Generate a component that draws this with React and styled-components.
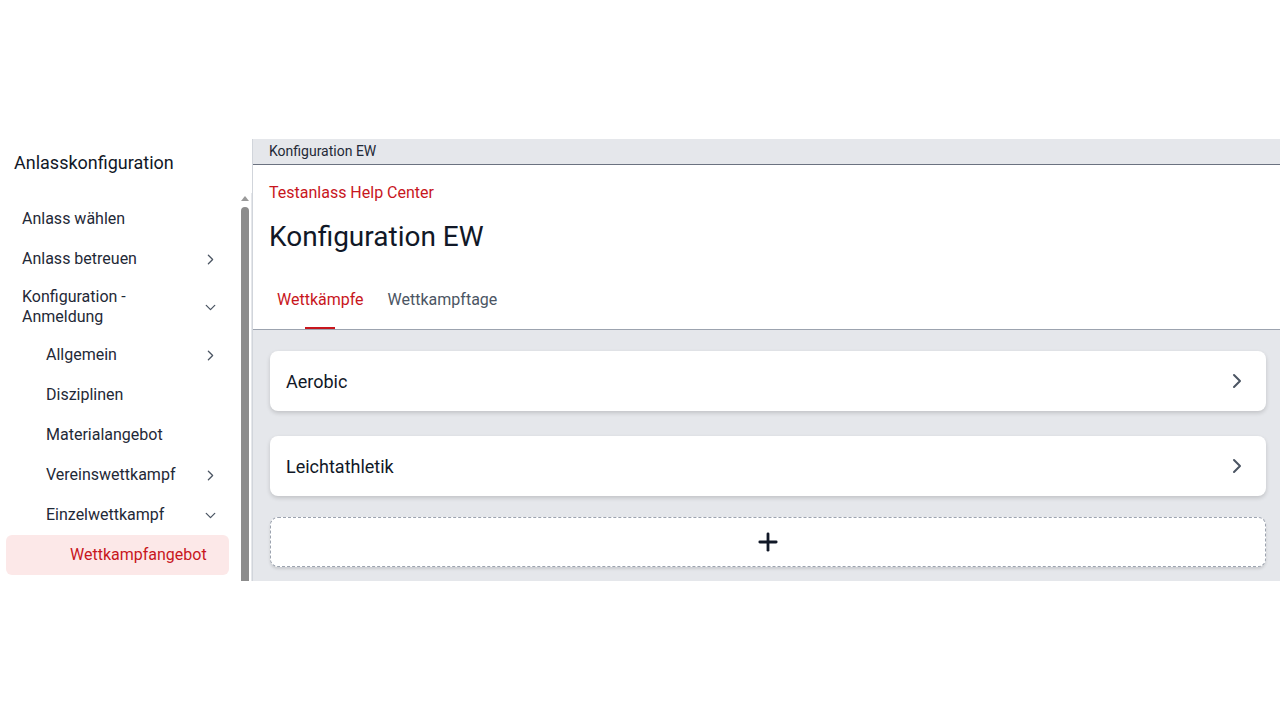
import React from 'react';
import styled, { createGlobalStyle } from 'styled-components';
import { ChevronRight, ChevronDown, Plus } from 'lucide-react';

const GlobalStyle = createGlobalStyle`
  body {
    margin: 0;
    background: #ffffff;
    font-family: Roboto, "Noto Sans", "Liberation Sans", sans-serif;
    color: #111827;
  }
`;

const Page = styled.div`
  display: flex;
  padding-top: 139px;
  height: 442px;
`;

const Sidebar = styled.aside`
  width: 252px;
  display: flex;
  flex-direction: column;
  flex-shrink: 0;
`;

const SideTitle = styled.h2`
  margin: 0;
  padding: 13px 14px 0;
  height: 41px;
  font-size: 18px;
  font-weight: 400;
  line-height: 22px;
  color: #111827;
`;

const SideBody = styled.div`
  flex: 1;
  display: flex;
  min-height: 0;
`;

const NavList = styled.nav`
  flex: 1;
  padding-top: 6px;
  overflow: hidden;
`;

const NavItem = styled.div`
  display: flex;
  align-items: center;
  justify-content: space-between;
  min-height: 40px;
  box-sizing: border-box;
  margin-left: 6px;
  width: 223px;
  padding: 8px 10px 8px ${(p) => 16 + p.level * 24}px;
  border-radius: 6px;
  font-size: 16px;
  line-height: 20px;
  color: ${(p) => (p.active ? '#c8161d' : '#1f2937')};
  background: ${(p) => (p.active ? '#fce8e8' : 'transparent')};
  svg {
    color: #4b5563;
    flex-shrink: 0;
  }
`;

const Rail = styled.div`
  width: 12px;
  display: flex;
  flex-direction: column;
  align-items: center;
  padding-top: 3px;
  border-right: 1px solid #e5e7eb;
`;

const RailArrow = styled.div`
  width: 0;
  height: 0;
  border-left: 4px solid transparent;
  border-right: 4px solid transparent;
  border-bottom: 5px solid #9a9a9a;
  margin-bottom: 6px;
`;

const RailThumb = styled.div`
  flex: 1;
  width: 8px;
  background: #8c8c8c;
  border-radius: 4px 4px 0 0;
`;

const Main = styled.main`
  flex: 1;
  display: flex;
  flex-direction: column;
  border-left: 1px solid #d1d5db;
`;

const Crumb = styled.div`
  height: 26px;
  box-sizing: border-box;
  padding: 3px 16px 0;
  background: #e5e7eb;
  border-bottom: 1px solid #6b7280;
  font-size: 14px;
  line-height: 18px;
  color: #1f2937;
`;

const Head = styled.header`
  padding: 17px 16px 0;
  border-bottom: 1px solid #9ca3af;
`;

const Eyebrow = styled.div`
  font-size: 16px;
  line-height: 22px;
  color: #c8161d;
`;

const Title = styled.h1`
  margin: 16px 0 0;
  font-size: 28px;
  font-weight: 400;
  line-height: 34px;
  color: #111827;
`;

const Tabs = styled.div`
  display: flex;
  margin: 36px 0 0 -4px;
`;

const Tab = styled.button`
  position: relative;
  border: 0;
  background: none;
  padding: 0 12px 19px;
  font-family: inherit;
  font-size: 16px;
  line-height: 20px;
  color: ${(p) => (p.active ? '#c8161d' : '#4b5563')};
  &::after {
    content: '';
    display: ${(p) => (p.active ? 'block' : 'none')};
    position: absolute;
    left: 50%;
    bottom: 0;
    width: 30px;
    height: 2px;
    margin-left: -15px;
    background: #c8161d;
  }
`;

const Content = styled.section`
  flex: 1;
  background: #e5e7eb;
  padding: 21px 14px 0 17px;
  display: flex;
  flex-direction: column;
  gap: 25px;
`;

const Card = styled.div`
  height: 60px;
  box-sizing: border-box;
  display: flex;
  align-items: center;
  justify-content: space-between;
  padding: 0 17px 0 16px;
  background: #ffffff;
  border-radius: 8px;
  box-shadow: 0 2px 4px rgba(0, 0, 0, 0.16);
  font-size: 18px;
  color: #111827;
  svg {
    color: #4b5563;
  }
`;

const AddCard = styled.button`
  margin-top: -4px;
  height: 50px;
  background: #ffffff;
  border: 1px dashed #9ca3af;
  border-radius: 8px;
  box-shadow: 0 2px 3px rgba(0, 0, 0, 0.12);
  display: flex;
  align-items: center;
  justify-content: center;
  color: #111827;
`;

const nav = [
  { label: 'Anlass wählen', level: 0 },
  { label: 'Anlass betreuen', level: 0, icon: 'right' },
  { label: 'Konfiguration -\nAnmeldung', level: 0, icon: 'down' },
  { label: 'Allgemein', level: 1, icon: 'right' },
  { label: 'Disziplinen', level: 1 },
  { label: 'Materialangebot', level: 1 },
  { label: 'Vereinswettkampf', level: 1, icon: 'right' },
  { label: 'Einzelwettkampf', level: 1, icon: 'down' },
  { label: 'Wettkampfangebot', level: 2, active: true },
];

function App() {
  return (
    <>
      <GlobalStyle />
      <Page>
        <Sidebar>
          <SideTitle>Anlasskonfiguration</SideTitle>
          <SideBody>
            <NavList>
              {nav.map((item) => (
                <NavItem key={item.label} level={item.level} active={item.active}>
                  <span style={{ whiteSpace: 'pre-line' }}>{item.label}</span>
                  {item.icon === 'right' && <ChevronRight size={17} strokeWidth={1.8} />}
                  {item.icon === 'down' && <ChevronDown size={17} strokeWidth={1.8} />}
                </NavItem>
              ))}
            </NavList>
            <Rail>
              <RailArrow />
              <RailThumb />
            </Rail>
          </SideBody>
        </Sidebar>
        <Main>
          <Crumb>Konfiguration EW</Crumb>
          <Head>
            <Eyebrow>Testanlass Help Center</Eyebrow>
            <Title>Konfiguration EW</Title>
            <Tabs>
              <Tab active>Wettkämpfe</Tab>
              <Tab>Wettkampftage</Tab>
            </Tabs>
          </Head>
          <Content>
            <Card>
              Aerobic
              <ChevronRight size={24} strokeWidth={2} />
            </Card>
            <Card>
              Leichtathletik
              <ChevronRight size={24} strokeWidth={2} />
            </Card>
            <AddCard>
              <Plus size={28} strokeWidth={2.4} />
            </AddCard>
          </Content>
        </Main>
      </Page>
    </>
  );
}

export default App;
